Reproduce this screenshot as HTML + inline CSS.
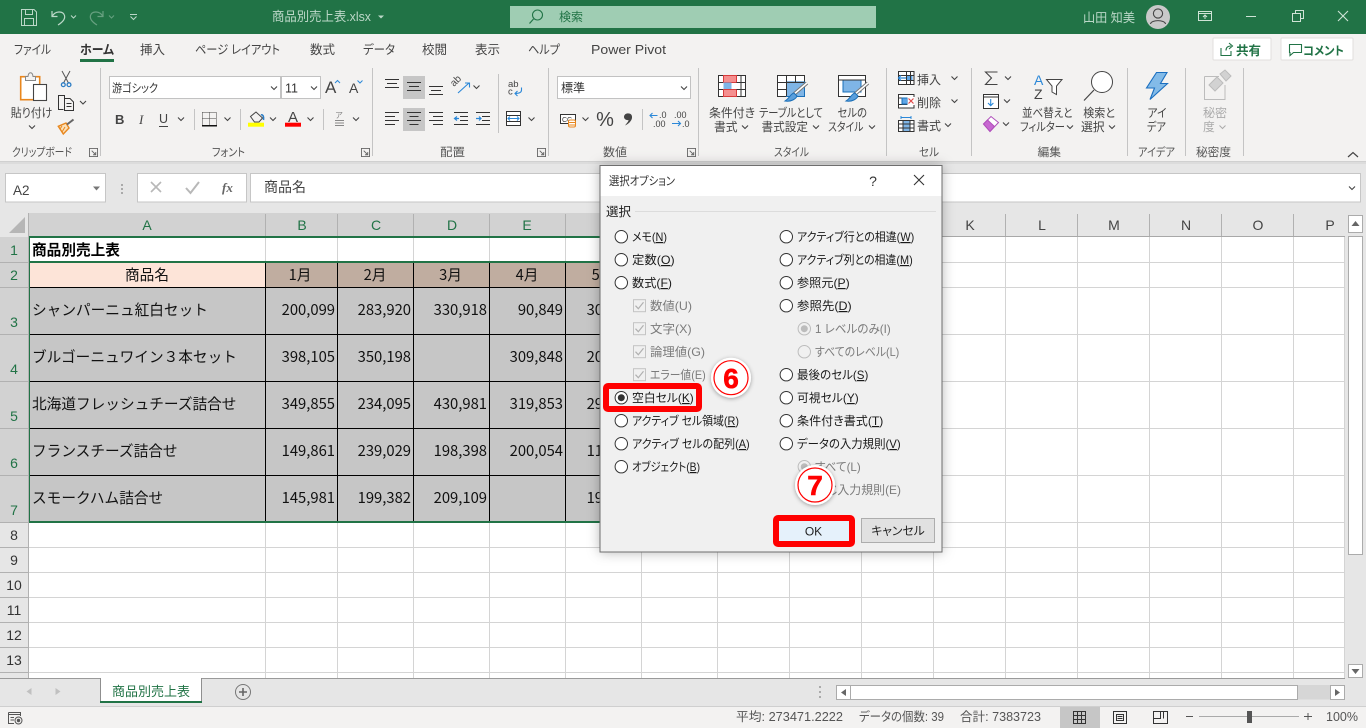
<!DOCTYPE html>
<html lang="ja"><head><meta charset="utf-8"><title>商品別売上表.xlsx - Excel</title>
<style>
html,body{margin:0;padding:0;width:1366px;height:728px;overflow:hidden;background:#fff}
svg{display:block;position:absolute;left:0;top:0}
text{font-family:"Liberation Sans","Noto Sans CJK JP",sans-serif;font-feature-settings:"palt";fill:#3f3f3f;font-size:12px}
.cell{font-family:"Noto Sans CJK JP",sans-serif;font-feature-settings:normal;font-size:14.67px;fill:#111;font-weight:400}
.num{font-family:"Noto Sans CJK JP",sans-serif;font-feature-settings:normal;font-size:14.8px;fill:#111;text-anchor:end;font-weight:400}
.ch{text-anchor:middle;font-size:14px;fill:#217346}
.chn{text-anchor:middle;font-size:14px;fill:#444}
.rh{text-anchor:middle;font-size:14px;fill:#217346}
.rhn{text-anchor:middle;font-size:14px;fill:#333}
.tab{font-size:12.5px;fill:#444}
.rb{font-size:11.8px;fill:#444}
.m{text-anchor:middle}
.grp{font-size:11.5px;fill:#555}
.tt{font-size:13px;fill:#bcd8c8}
.d{font-size:12px;fill:#1a1a1a}
.dd{font-size:12px;fill:#7b7b7b}
.st{font-size:12.5px;fill:#555}
.sm{font-size:9px;fill:#444}
.u{text-decoration:underline}
</style></head><body>
<svg width="1366" height="728" viewBox="0 0 1366 728" xmlns="http://www.w3.org/2000/svg">
<defs>
<path id="c" d="M-3,-1.5 L0,1.5 L3,-1.5" fill="none" stroke="#444" stroke-width="1.1"/>
<g id="r"><circle r="6.2" fill="#fff" stroke="#333" stroke-width="1"/></g>
<g id="rd"><circle r="6.2" fill="#f0f0f0" stroke="#bcbcbc" stroke-width="1"/></g>
<g id="cb"><rect x="-6" y="-6" width="12" height="12" fill="#f0f0f0" stroke="#c4c4c4"/><path d="M-4,0 L-1.2,3 L4,-3.5" fill="none" stroke="#b0b0b0" stroke-width="1.2"/></g>
<g id="lc"><path d="M0.5,0.5H9.5V9.5H0.5Z M3,3L7.5,7.5 M7.5,4.5V7.5H4.5" fill="none" stroke="#666" stroke-width="1" transform="scale(.9)"/></g>
<filter id="ds" x="-10%" y="-10%" width="120%" height="120%"><feDropShadow dx="0" dy="0" stdDeviation="6" flood-color="#000" flood-opacity=".28"/></filter>
<filter id="bs" x="-30%" y="-30%" width="160%" height="160%"><feDropShadow dx="0" dy="1" stdDeviation="2" flood-color="#000" flood-opacity=".35"/></filter>
</defs>

<!-- SHEET -->
<rect x="0" y="161" width="1366" height="52" fill="#e6e6e6"/>
<rect x="0" y="213" width="1366" height="465" fill="#fff"/>
<rect x="0" y="213" width="1345" height="24" fill="#e6e6e6"/>
<rect x="0" y="237" width="29" height="441" fill="#e6e6e6"/>
<rect x="29" y="213" width="905" height="24" fill="#d2d2d2"/>
<rect x="0" y="237" width="29" height="285" fill="#d2d2d2"/>
<path d="M25,217V233H9Z" fill="#b6b6b6"/>

<g stroke="#d4d4d4" stroke-width="1" fill="none">
<path d="M265.5,237V678M337.5,237V678M413.5,237V678M489.5,237V678M565.5,237V678M641.5,237V678M717.5,237V678M789.5,237V678M861.5,237V678M933.5,237V678M1005.5,237V678M1077.5,237V678M1149.5,237V678M1221.5,237V678M1293.5,237V678M1344.5,237V678"/>
<path d="M29,262.5H1345M29,287.5H1345M29,334.5H1345M29,381.5H1345M29,428.5H1345M29,475.5H1345M29,522.5H1345M29,547.5H1345M29,572.5H1345M29,597.5H1345M29,622.5H1345M29,647.5H1345M29,672.5H1345"/>
</g>
<!-- filled cells -->
<rect x="30" y="263" width="235" height="24" fill="#fde4d8"/>
<rect x="266" y="263" width="376" height="24" fill="#c0ada0"/>
<rect x="30" y="288" width="612" height="233" fill="#c6c6c6"/>
<g stroke="#000" stroke-width="1" fill="none">
<path d="M30,287.5H642M30,334.5H642M30,381.5H642M30,428.5H642M30,475.5H642"/>
<path d="M265.5,263V522M337.5,263V522M413.5,263V522M489.5,263V522M565.5,263V522"/>
</g>
<g stroke="#217346" stroke-width="2" fill="none">
<path d="M29,237H642M29,262H642M29,522H642M29,237V523"/>
</g>
<!-- header separators -->
<g stroke="#b1b1b1" stroke-width="1" fill="none">
<path d="M28.5,213V678M265.5,214V236M337.5,214V236M413.5,214V236M489.5,214V236M565.5,214V236M933.5,214V236M1005.5,214V236M1077.5,214V236M1149.5,214V236M1221.5,214V236M1293.5,214V236"/>
<path d="M0,262.5H28M0,287.5H28M0,334.5H28M0,381.5H28M0,428.5H28M0,475.5H28M0,522.5H28M0,547.5H28M0,572.5H28M0,597.5H28M0,622.5H28M0,647.5H28M0,672.5H28"/>
<path d="M934,236.5H1345" stroke="#a8a8a8"/>
</g>
<text class="ch" x="147" y="230">A</text><text class="ch" x="302" y="230">B</text><text class="ch" x="376" y="230">C</text><text class="ch" x="452" y="230">D</text><text class="ch" x="527" y="230">E</text>
<text class="chn" x="970" y="230">K</text><text class="chn" x="1042" y="230">L</text><text class="chn" x="1114" y="230">M</text><text class="chn" x="1186" y="230">N</text><text class="chn" x="1258" y="230">O</text><text class="chn" x="1330" y="230">P</text>
<text class="rh" x="14" y="255">1</text><text class="rh" x="14" y="280">2</text><text class="rh" x="14" y="327">3</text><text class="rh" x="14" y="374">4</text><text class="rh" x="14" y="421">5</text><text class="rh" x="14" y="468">6</text><text class="rh" x="14" y="515">7</text>
<text class="rhn" x="14" y="540">8</text><text class="rhn" x="14" y="565">9</text><text class="rhn" x="14" y="590">10</text><text class="rhn" x="14" y="615">11</text><text class="rhn" x="14" y="640">12</text><text class="rhn" x="14" y="665">13</text>

<text class="cell" x="32" y="255" style="font-weight:700;fill:#000">商品別売上表</text>
<text class="cell m" x="147" y="280">商品名</text>
<text class="cell m" x="300" y="280">1月</text><text class="cell m" x="375" y="280">2月</text><text class="cell m" x="450.5" y="280">3月</text><text class="cell m" x="527" y="280">4月</text><text class="cell m" x="603" y="280">5月</text>
<text class="cell" x="32" y="315">シャンパーニュ紅白セット</text>
<text class="cell" x="32" y="362">ブルゴーニュワイン３本セット</text>
<text class="cell" x="32" y="409">北海道フレッシュチーズ詰合せ</text>
<text class="cell" x="32" y="456">フランスチーズ詰合せ</text>
<text class="cell" x="32" y="503">スモークハム詰合せ</text>
<text class="num" x="335" y="315">200,099</text><text class="num" x="411" y="315">283,920</text><text class="num" x="487" y="315">330,918</text><text class="num" x="563" y="315">90,849</text><text class="num" x="603" y="315">30</text>
<text class="num" x="335" y="362">398,105</text><text class="num" x="411" y="362">350,198</text><text class="num" x="563" y="362">309,848</text><text class="num" x="603" y="362">20</text>
<text class="num" x="335" y="409">349,855</text><text class="num" x="411" y="409">234,095</text><text class="num" x="487" y="409">430,981</text><text class="num" x="563" y="409">319,853</text><text class="num" x="603" y="409">29</text>
<text class="num" x="335" y="456">149,861</text><text class="num" x="411" y="456">239,029</text><text class="num" x="487" y="456">198,398</text><text class="num" x="563" y="456">200,054</text><text class="num" x="603" y="456">11</text>
<text class="num" x="335" y="503">145,981</text><text class="num" x="411" y="503">199,382</text><text class="num" x="487" y="503">209,109</text><text class="num" x="603" y="503">19</text>

<!-- vertical scrollbar -->
<rect x="1345" y="213" width="21" height="465" fill="#e6e6e6"/>
<rect x="1348.5" y="215.5" width="14" height="17" fill="#fff" stroke="#ababab"/><path d="M1351.5,226L1355.5,221L1359.5,226Z" fill="#666"/>
<rect x="1348.5" y="236.5" width="14" height="318" fill="#fff" stroke="#ababab"/>
<rect x="1348.5" y="664.5" width="14" height="13" fill="#fff" stroke="#ababab"/><path d="M1351.5,669L1355.5,674L1359.5,669Z" fill="#666"/>

<!-- tab bar -->
<rect x="0" y="678" width="1366" height="28" fill="#e6e6e6"/>
<path d="M0,678.5H1345" stroke="#9a9a9a"/>
<rect x="100" y="678" width="101" height="25" fill="#fff"/>
<path d="M100.5,678V702M201.5,678V702" stroke="#8f8f8f"/>
<rect x="100" y="701" width="102" height="2" fill="#217346"/>
<text x="151" y="696" class="m" style="font-size:13px;fill:#217346;font-feature-settings:normal">商品別売上表</text>
<path d="M31.5,688V695L26.5,691.5Z" fill="#c0c0c0"/><path d="M55.5,688V695L60.5,691.5Z" fill="#c0c0c0"/>
<circle cx="243" cy="692" r="7.5" fill="none" stroke="#777" stroke-width="1"/><path d="M239,692H247M243,688V696" stroke="#666" stroke-width="1.6"/>
<g fill="#aaa"><rect x="819" y="686" width="2" height="2"/><rect x="819" y="691" width="2" height="2"/><rect x="819" y="696" width="2" height="2"/></g>
<rect x="1298" y="685" width="33" height="14.5" fill="#d6d6d6"/>
<rect x="836.5" y="685.5" width="14" height="14" fill="#fff" stroke="#ababab"/><path d="M846,689V696L841,692.5Z" fill="#666"/>
<rect x="850.5" y="685.5" width="447" height="14" fill="#fff" stroke="#ababab"/>
<rect x="1330.5" y="685.5" width="14" height="14" fill="#fff" stroke="#ababab"/><path d="M1335,689V696L1340,692.5Z" fill="#666"/>

<!-- status bar -->
<rect x="0" y="706" width="1366" height="22" fill="#f3f2f1"/>
<path d="M0,706.5H1366" stroke="#cfcfcf"/>
<g fill="none" stroke="#555"><path d="M8.5,712.5H20.5V716M8.5,712.5V723.5H14M8.5,714.5H20.5M10.5,717.5H14M10.5,720H14"/><circle cx="18.5" cy="720.5" r="3.5"/><circle cx="18.5" cy="720.5" r="1.2" fill="#555"/></g>
<text class="st" x="736" y="721" textLength="107" lengthAdjust="spacingAndGlyphs">平均: 273471.2222</text><text class="st" x="859" y="721" textLength="85" lengthAdjust="spacingAndGlyphs">データの個数: 39</text><text class="st" x="960" y="721" textLength="81" lengthAdjust="spacingAndGlyphs">合計: 7383723</text>
<rect x="1060" y="707" width="40" height="21" fill="#c6c6c6"/>
<g fill="none" stroke="#333"><path d="M1073.5,711.5H1085.5V723.5H1073.5ZM1077.5,711.5V723.5M1081.5,711.5V723.5M1073.5,715.5H1085.5M1073.5,719.5H1085.5"/>
<path d="M1113.5,711.5H1126.5V723.5H1113.5ZM1116.5,714.5H1123.5V720.5H1116.5ZM1117.5,716.5H1122.5M1117.5,718.5H1122.5"/>
<path d="M1153.5,711.5H1167.5V723.5H1153.5ZM1160.5,711.5V718.5H1153.5M1163.5,711.5V718.5"/></g>
<path d="M1186,716.5H1193M1304,716.5H1312M1308,713V720" stroke="#555" stroke-width="1"/>
<path d="M1199,716.5H1299" stroke="#aaa"/><rect x="1247" y="711" width="5" height="12" fill="#555"/>
<text class="st" x="1326" y="721" textLength="32" lengthAdjust="spacingAndGlyphs">100%</text>

<!-- formula bar -->
<rect x="5.5" y="173.5" width="100" height="28.5" fill="#fff" stroke="#c6c6c6"/>
<text x="13" y="195" style="font-size:13.5px;fill:#444">A2</text>
<path d="M93,186.5H100L96.5,190.5Z" fill="#777"/>
<g fill="#aaa"><rect x="121" y="184" width="2" height="2"/><rect x="121" y="188" width="2" height="2"/><rect x="121" y="192" width="2" height="2"/></g>
<rect x="137.5" y="173.5" width="109" height="28.5" fill="#fff" stroke="#c6c6c6"/>
<path d="M151,182L161,192M161,182L151,192" stroke="#b8b8b8" stroke-width="1.6"/>
<path d="M186,188L190.5,193L199,182" fill="none" stroke="#b8b8b8" stroke-width="2"/>
<text x="222" y="192" style="font-family:'Liberation Serif',serif;font-style:italic;font-weight:700;font-size:13px;fill:#666">fx</text>
<rect x="250.5" y="173.5" width="1110" height="28.5" fill="#fff" stroke="#c6c6c6"/>
<text x="264" y="192" style="font-size:14px;fill:#444;font-feature-settings:normal">商品名</text>
<use href="#c" x="1352" y="188"/>

<!-- TITLE BAR -->
<rect x="0" y="0" width="1366" height="34" fill="#217346"/>
<g fill="none" stroke="#bcd8c8" stroke-width="1">
<path d="M21.5,9.5H34L36.5,12V25.5H21.5ZM25.5,9.5V14.5H32.5V9.5M24.5,25.5V18.5H33.5V25.5"/>
<path d="M52,11V16.5H57.5M52.5,16C55,11 63,10.5 64.5,15.5C65.5,19 62,22.5 58,25" stroke-width="1.2"/>
<path d="M71,15.5L73.5,18L76,15.5"/>
<g opacity=".45"><path d="M103,11V16.5H97.5M102.5,16C100,11 92,10.5 90.5,15.5C89.5,19 93,22.5 97,25" stroke-width="1.2"/><path d="M109,15.5L111.5,18L114,15.5"/></g>
<path d="M130,14.5H137M130.5,16.5L133.5,19.5L136.5,16.5"/>
</g>
<text class="tt" x="272" y="21" textLength="99" lengthAdjust="spacingAndGlyphs">商品別売上表.xlsx</text>
<path d="M378,15.5H384L381,18.5Z" fill="#bcd8c8"/>
<rect x="510" y="6" width="366" height="22" fill="#9fcdb3"/>
<circle cx="537.5" cy="15" r="5" fill="none" stroke="#217346" stroke-width="1.1"/><path d="M533.5,19L529.5,23.5" stroke="#217346" stroke-width="1.2"/>
<text x="559" y="21" style="font-size:12px;fill:#217346">検索</text>
<text class="tt" x="1083" y="22" style="font-size:12.5px" textLength="52" lengthAdjust="spacingAndGlyphs">山田 知美</text>
<circle cx="1158" cy="17" r="12" fill="#c9c9c9"/>
<circle cx="1158" cy="13.5" r="4.6" fill="none" stroke="#444" stroke-width="1.1"/><path d="M1150.5,24C1151,19.5 1165,19.5 1165.5,24" fill="none" stroke="#444" stroke-width="1.1"/>
<g fill="none" stroke="#cfe3d6" stroke-width="1">
<path d="M1198.5,11.5H1211.5V20.5H1198.5ZM1198.5,13.5H1211.5M1205,19V15M1203,17L1205,15L1207,17"/>
<path d="M1246,16.5H1256"/>
<path d="M1292.5,13.5H1300.5V21.5H1292.5ZM1295.5,13V10.5H1303.5V18.5H1301"/>
<path d="M1338,11L1348,21M1348,11L1338,21" stroke-width="1.1"/>
</g>

<!-- RIBBON -->
<rect x="0" y="34" width="1366" height="127" fill="#f3f2f1"/>
<rect x="0" y="161" width="1366" height="1" fill="#d0d0d0"/>
<rect x="0" y="162" width="1366" height="2" fill="#dcdcdc"/>
<text class="tab" x="14" y="54" textLength="37" lengthAdjust="spacingAndGlyphs">ファイル</text>
<text class="tab" x="80" y="54" style="font-weight:700;fill:#333" textLength="34" lengthAdjust="spacingAndGlyphs">ホーム</text>
<rect x="80" y="59" width="34" height="3" fill="#217346"/>
<text class="tab" x="140" y="54">挿入</text><text class="tab" x="195" y="54" textLength="85" lengthAdjust="spacingAndGlyphs">ページ レイアウト</text><text class="tab" x="310" y="54">数式</text><text class="tab" x="363" y="54" textLength="32" lengthAdjust="spacingAndGlyphs">データ</text><text class="tab" x="422" y="54">校閲</text><text class="tab" x="475" y="54">表示</text><text class="tab" x="528" y="54" textLength="32" lengthAdjust="spacingAndGlyphs">ヘルプ</text><text class="tab" x="591" y="54" style="font-size:13.2px" textLength="75" lengthAdjust="spacingAndGlyphs">Power Pivot</text>

<rect x="1213" y="38" width="58" height="22" rx="1" fill="#fff" stroke="#e1dfdd"/>
<path d="M1221,48V55.5H1231V51M1226,50.5C1226,47.5 1228,46 1231,46M1229,43L1232.5,46L1229,49" fill="none" stroke="#217346" stroke-width="1.1"/>
<text x="1236" y="55" style="font-size:12.5px;font-weight:700;fill:#217346">共有</text>
<rect x="1281" y="38" width="72" height="22" rx="1" fill="#fff" stroke="#e1dfdd"/>
<path d="M1289.5,44.5H1301.5V52.5H1293.5L1290,55.5V52.5H1289.5Z" fill="none" stroke="#217346" stroke-width="1.1"/>
<text x="1303" y="55" style="font-size:12px;font-weight:700;fill:#217346" textLength="41" lengthAdjust="spacingAndGlyphs">コメント</text>

<g stroke="#c4c4c4" stroke-width="1" fill="none">
<path d="M100.5,68V156M372.5,68V156M548.5,68V156M698.5,68V156M886.5,68V156M971.5,68V156M1127.5,68V156M1185.5,68V156M1243.5,68V156M498.5,74V133"/>
<path d="M194.5,109V130M240.5,109V130M323.5,109V130M642.5,109V130"/>
</g>

<!-- clipboard -->
<rect x="20.7" y="76.7" width="19" height="23" fill="#fff" stroke="#e8871e" stroke-width="1.6"/>
<path d="M25.5,80.5V76.5H28C28.5,71.5 32.5,71.5 33,76.5H35.5V80.5Z" fill="#f3f2f1" stroke="#888"/>
<rect x="33.5" y="84.5" width="13" height="16" fill="#fff" stroke="#444" stroke-width="1.1"/>
<text class="rb" x="10.7" y="117" textLength="41.6" lengthAdjust="spacingAndGlyphs">貼り付け</text><use href="#c" x="32" y="127"/>
<g fill="none">
<path d="M62,71L68.5,83M70,71L63.5,83" stroke="#555"/><circle cx="63.3" cy="84.7" r="1.9" stroke="#2b7cc4" stroke-width="1.3"/><circle cx="69" cy="84.7" r="1.9" stroke="#2b7cc4" stroke-width="1.3"/>
<path d="M63.5,109.5H58.5V95.5H64.5V98" stroke="#333"/>
<path d="M64.5,98.5H70L73.5,102V110.500H64.5ZM66.5,103.500H71.500M66.5,106.500H71.500" stroke="#333"/>
<path d="M58.3,126.3L66,123L69,128L63.3,134Z" fill="#fbe0b8" stroke="#e8871e" stroke-width="1.4"/>
<path d="M62,126L60,129M65,127L62,132" stroke="#e8871e"/>
<path d="M67,124.500L73.500,119.500" stroke="#666" stroke-width="2"/>
</g>
<use href="#c" x="83" y="102.500"/>
<text class="grp" x="12" y="156" textLength="60" lengthAdjust="spacingAndGlyphs">クリップボード</text><use href="#lc" x="89" y="148"/>

<!-- font -->
<rect x="109.5" y="76.5" width="171" height="22" fill="#fff" stroke="#c2c2c2"/>
<rect x="281.5" y="76.5" width="39" height="22" fill="#fff" stroke="#c2c2c2"/>
<text x="112" y="92" style="font-size:11.5px;fill:#333" textLength="46" lengthAdjust="spacingAndGlyphs">游ゴシック</text><use href="#c" x="274" y="88"/>
<text x="285" y="92.5" style="font-size:12.5px;fill:#333">11</text><use href="#c" x="314" y="88"/>
<text x="325" y="93" style="font-size:17px;fill:#444">A</text><path d="M335,83L337.5,80.5L340,83" fill="none" stroke="#2b88d8"/>
<text x="349" y="93" style="font-size:14px;fill:#444">A</text><path d="M357.5,80.5L360,83L362.5,80.5" fill="none" stroke="#2b88d8"/>
<text x="115" y="124" style="font-size:13px;font-weight:700;fill:#444">B</text>
<text x="139" y="124" style="font-size:13px;font-style:italic;font-family:'Liberation Serif',serif;fill:#444">I</text>
<text x="159" y="123" style="font-size:12.5px;fill:#444">U</text><path d="M159,126.5H168" stroke="#444"/>
<use href="#c" x="181" y="119"/>
<path d="M202.5,112.5H216.5M202.5,112.500V125M216.5,112.500V125M209.5,112.500V125M202.5,118.500H216.5" stroke="#444" stroke-dasharray="1 1" fill="none"/><rect x="202" y="125" width="15" height="1.5" fill="#111"/>
<use href="#c" x="227.5" y="119"/>
<path d="M250.5,116.5L256,112L262.500,118L259,122H254.500Z" fill="#f3f2f1" stroke="#444"/><path d="M261,115C263,114 264,117 263.500,120" stroke="#2b7cc4" fill="none" stroke-width="1.6"/>
<rect x="248" y="122.7" width="16" height="4" fill="#ff0"/><use href="#c" x="273" y="119"/>
<text class="m" x="293" y="122" style="font-size:15px;fill:#444">A</text><rect x="285" y="122.7" width="16" height="4" fill="#f00"/><use href="#c" x="310.5" y="119"/>
<text class="m" x="339" y="118" style="font-size:8px;fill:#888">ア</text><path d="M335,120.5H344M335,123H344M335,125.500H344" stroke="#888"/><use href="#c" x="356" y="119"/>
<text class="grp" x="212" y="156" textLength="33" lengthAdjust="spacingAndGlyphs">フォント</text><use href="#lc" x="361" y="148"/>

<!-- alignment -->
<rect x="403" y="76" width="22" height="23" fill="#c6c6c6"/><rect x="403" y="108" width="22" height="23" fill="#c6c6c6"/>
<g stroke="#333" stroke-width="1" fill="none">
<path d="M385,79.5H399M387,83.5H397M385,87.5H399M407,82.5H421M409,86.5H419M407,90.5H421M429,86.5H443M431,90.5H441M429,94.5H443"/>
<path d="M385,112.5H399M385,116.5H395M385,120.5H399M385,124.5H395"/>
<path d="M407,112.5H421M409.500,116.5H418.500M407,120.5H421M409.5,124.5H418.500"/>
<path d="M429,112.5H443M433,116.5H443M429,120.5H443M433,124.5H443"/>
<path d="M454,112.5H468M460,116.5H468M460,120.5H468M454,124.5H468"/>
<path d="M476,112.5H490M482,116.5H490M482,120.5H490M476,124.5H490"/>
</g>
<path d="M454.5,118.5H459M457,116.500L454.5,118.5L457,120.500M476,118.5H481M479,116.500L481,118.5L479,120.500" stroke="#2b88d8" fill="none" stroke-width="1.2"/>
<text x="0" y="0" transform="translate(454,87) rotate(-45)" style="font-size:10px;fill:#444">ab</text>
<path d="M458,93L469,83M465,83H469.500V87.500" stroke="#2b88d8" fill="none" stroke-width="1.1"/><use href="#c" x="476.5" y="87"/>
<text x="508" y="87" style="font-size:9.5px;fill:#444">ab</text><text x="508" y="94.5" style="font-size:9.5px;fill:#444">c</text><path d="M521.5,87.500V90C521.5,93 518.500,93.500 515,93.500M517.500,91L515,93.500L517.500,96" stroke="#2b88d8" fill="none" stroke-width="1.1"/>
<rect x="506.5" y="111.5" width="14" height="14" fill="#fff" stroke="#333"/><path d="M507,115.500H520M507,121.500H520" stroke="#333"/><path d="M507.5,118.5H519.500M510,116.5L508,118.500L510,120.500M517,116.5L519,118.500L517,120.500" stroke="#2b88d8" fill="none"/><use href="#c" x="531.5" y="119"/>
<text class="grp" x="440" y="156" textLength="25" lengthAdjust="spacingAndGlyphs">配置</text><use href="#lc" x="537" y="148"/>

<!-- number -->
<rect x="557.5" y="76.5" width="133" height="22" fill="#fff" stroke="#c2c2c2"/>
<text x="561" y="92" style="font-size:12px;fill:#333">標準</text><use href="#c" x="684" y="88"/>
<rect x="560.5" y="114.5" width="15" height="9" fill="#fff" stroke="#333"/><text x="562" y="122" style="font-size:7px;fill:#333">CC</text><rect x="568.5" y="120" width="7" height="7" rx="1.5" fill="#fff" stroke="#e8871e"/><path d="M569,122.500H575.500M569,125H575.500" stroke="#e8871e"/>
<use href="#c" x="585.5" y="119"/>
<text class="m" x="605" y="126" style="font-size:20px;fill:#444">%</text>
<path d="M627,113.500C630,113 632.500,114.500 632,118C631.500,121 628.500,124 625,125.500C627,123 628.500,121.500 628.500,120C626.500,120.500 624,119 624,117C624,115 625.500,113.700 627,113.500Z" fill="#444"/>
<path d="M650,115.500H657.500M652.500,113L650,115.500L652.500,118" stroke="#2b88d8" fill="none" stroke-width="1.1"/>
<text class="sm" x="659" y="118">.0</text><text class="sm" x="653" y="126.800">.00</text>
<text class="sm" x="674" y="118">.00</text><text class="sm" x="682" y="126.800">.0</text>
<path d="M672,123.500H680.500M678,121L680.500,123.500L678,126" stroke="#2b88d8" fill="none" stroke-width="1.1"/>
<text class="grp" x="603" y="156" textLength="24" lengthAdjust="spacingAndGlyphs">数値</text><use href="#lc" x="687" y="148"/>

<!-- styles -->
<g stroke="#333" fill="none">
<rect x="718.5" y="75.5" width="27" height="21" fill="#fff"/>
<rect x="723.5" y="75.5" width="13" height="7" fill="#f58f8f" stroke="#d83b3b"/><rect x="723.5" y="82.5" width="8" height="7" fill="#7fb5e6" stroke="none"/><rect x="723.5" y="89.5" width="13" height="7" fill="#f58f8f" stroke="#d83b3b"/>
<path d="M718.5,82.5H723M718.5,89.5H723M736.5,82.5H745.5M736.5,89.5H745.5M741,75.5V96.5"/>
<rect x="777.5" y="75.5" width="27" height="21" fill="#fff"/>
<rect x="786.5" y="82" width="18" height="14.5" fill="#7fb5e6" stroke="#1a6fb8"/>
<path d="M777.5,82.5H804M777.5,89.5H786M786.5,75.5V96M795.5,75.5V82"/>
<rect x="838.5" y="75.5" width="27" height="21" fill="#fff"/>
<rect x="843" y="80" width="18" height="12" fill="#7fb5e6" stroke="#1a6fb8"/>
<path d="M838.5,80H866"/>
</g>
<g fill="none"><path d="M807,83L793,95" stroke="#777" stroke-width="3.5"/><path d="M807,83L793,95" stroke="#fff" stroke-width="1.5"/><path d="M794,93C790,94 790,98 785,101C791,102 796,99 797,96Z" fill="#5b9fdc" stroke="#1a6fb8"/>
<path d="M868,83L854,95" stroke="#777" stroke-width="3.5"/><path d="M868,83L854,95" stroke="#fff" stroke-width="1.5"/><path d="M855,93C851,94 851,98 846,101C852,102 857,99 858,96Z" fill="#5b9fdc" stroke="#1a6fb8"/></g>
<text class="rb" x="709" y="117" textLength="46" lengthAdjust="spacingAndGlyphs">条件付き</text><text class="rb" x="714" y="131">書式</text><use href="#c" x="745" y="127"/>
<text class="rb" x="759" y="117" textLength="64" lengthAdjust="spacingAndGlyphs">テーブルとして</text><text class="rb" x="761.5" y="131" textLength="46.5" lengthAdjust="spacingAndGlyphs">書式設定</text><use href="#c" x="816" y="127"/>
<text class="rb" x="837.5" y="117" textLength="29.5" lengthAdjust="spacingAndGlyphs">セルの</text><text class="rb" x="828" y="131" textLength="35.500" lengthAdjust="spacingAndGlyphs">スタイル</text><use href="#c" x="872" y="127"/>
<text class="grp" x="774" y="156" textLength="35" lengthAdjust="spacingAndGlyphs">スタイル</text>

<!-- cells -->
<g fill="none" stroke="#333">
<rect x="898.5" y="71.5" width="15.5" height="13" fill="#fff"/><rect x="906.5" y="75.5" width="6" height="5.500" fill="#5da5e6" stroke="none"/><path d="M898.500,75.500H914M898.500,80.500H914M906.500,71.500V84.500M910.500,71.500V84.500"/><path d="M898.500,78H906M901,75.500L898.500,78L901,80.500" stroke="#2b88d8" stroke-width="1.200"/>
<rect x="898.5" y="94.5" width="15.5" height="13.500" fill="#fff"/><path d="M898.500,98H914M898.500,104.500H914"/><rect x="902" y="98" width="5.500" height="6" fill="#5da5e6" stroke="#1a6fb8"/><rect x="907.500" y="97" width="7" height="8" fill="#fff" stroke="none"/><path d="M908.500,98.500L913.500,103.500M913.500,98.500L908.500,103.500" stroke="#e04a4a" stroke-width="1.200"/>
<rect x="898.5" y="120.5" width="15.5" height="11" fill="#fff"/><rect x="903" y="121" width="7" height="10" fill="#7fb5e6" stroke="none"/><path d="M898.500,124H914M898.500,128H914M903,120.500V131.500M910,120.500V131.500"/><path d="M901,117.500H911M901,116V119M911,116V119" stroke="#2b88d8"/>
</g>
<text class="rb" x="917" y="84" style="font-size:12px">挿入</text><use href="#c" x="954.500" y="78"/>
<text class="rb" x="917" y="107" style="font-size:12px">削除</text><use href="#c" x="954.500" y="101"/>
<text class="rb" x="917" y="130" style="font-size:12px">書式</text><use href="#c" x="948" y="125"/>
<text class="grp" x="919" y="156" textLength="20" lengthAdjust="spacingAndGlyphs">セル</text>

<!-- editing -->
<path d="M997.500,72H985.500L991.500,78L985.500,84.500H997.500" fill="none" stroke="#444" stroke-width="1.100"/><use href="#c" x="1008" y="78"/>
<rect x="983.5" y="94.5" width="15" height="14" fill="#fff" stroke="#333"/><path d="M983.5,97H998.5" stroke="#333"/><path d="M990.700,99V105.500M988,103L990.700,105.700L993.400,103" stroke="#2b88d8" fill="none" stroke-width="1.100"/><use href="#c" x="1007" y="101"/>
<path d="M983.5,124L991,116.500L998.5,122.500L990,131.500Z" fill="#fff" stroke="#b04fbb"/><path d="M983.5,124L987.500,120L994.500,126.500L990,131.500Z" fill="#c768d1" stroke="#b04fbb"/><use href="#c" x="1006" y="124"/>
<text x="1034" y="85" style="font-size:14px;fill:#2b88d8">A</text><text x="1034" y="99" style="font-size:14px;fill:#444">Z</text>
<path d="M1046.5,79.5H1062L1056.5,86V94.500L1052,92V86Z" fill="#fff" stroke="#444"/>
<circle cx="1102" cy="82" r="10.5" fill="#fff" stroke="#444"/><path d="M1094,90L1084,100.5" stroke="#444" stroke-width="1.2"/>
<text class="rb" x="1022" y="117" textLength="50.500" lengthAdjust="spacingAndGlyphs">並べ替えと</text><text class="rb" x="1020" y="131" textLength="45" lengthAdjust="spacingAndGlyphs">フィルター</text><use href="#c" x="1070" y="127"/>
<text class="rb" x="1083.300" y="117" textLength="31.700" lengthAdjust="spacingAndGlyphs">検索と</text><text class="rb" x="1081" y="131">選択</text><use href="#c" x="1112" y="127"/>
<text class="grp" x="1037.500" y="156" textLength="23.500" lengthAdjust="spacingAndGlyphs">編集</text>

<!-- ideas -->
<path d="M1156.5,72.5H1167L1160.5,83.5H1167.5L1150,99.5L1154.5,88H1146.5Z" fill="#83bbe8" stroke="#1b6fc0" stroke-width="1.1"/>
<text class="rb" x="1147.500" y="117" textLength="19" lengthAdjust="spacingAndGlyphs">アイ</text><text class="rb" x="1147" y="131" textLength="19" lengthAdjust="spacingAndGlyphs">デア</text>
<text class="grp" x="1138" y="156" textLength="37" lengthAdjust="spacingAndGlyphs">アイデア</text>
<!-- sensitivity -->
<path d="M1204.5,76.5H1219M1204.5,76.500V99.500H1225V85" fill="#f3f2f1" stroke="#bcbcbc"/>
<path d="M1209,85L1217,77L1223,83L1215,91Z" fill="#d2d2d2" stroke="#bcbcbc"/><path d="M1220,74L1225,70L1231,76L1226,81Z" fill="#d2d2d2" stroke="#bcbcbc"/>
<text class="rb" x="1203" y="117" style="fill:#aaa" textLength="24" lengthAdjust="spacingAndGlyphs">秘密</text><text class="rb" x="1203" y="131" style="fill:#aaa">度</text>
<path d="M1219.500,125.500L1222.500,128.500L1225.500,125.500" fill="none" stroke="#aaa"/>
<text class="grp" x="1196" y="156" textLength="35" lengthAdjust="spacingAndGlyphs">秘密度</text>
<path d="M1348,157L1353,152.5L1358,157" fill="none" stroke="#444" stroke-width="1.2"/>

<!-- DIALOG -->
<rect x="600" y="165.5" width="342" height="386.5" fill="#f0f0f0" stroke="#6e6e6e" filter="url(#ds)"/>
<rect x="600.5" y="166" width="341" height="30" fill="#fff"/>
<text x="609" y="185" style="font-size:11.8px;fill:#333" textLength="66" lengthAdjust="spacingAndGlyphs">選択オプション</text>
<text x="873" y="186" class="m" style="font-size:14px;fill:#333">?</text>
<path d="M914,175L924,185M924,175L914,185" stroke="#333" stroke-width="1.1"/>
<text x="606" y="216" class="d" style="font-size:12.5px">選択</text>
<path d="M635,211.5H936" stroke="#dcdcdc"/>

<use href="#r" x="621.3" y="236.7"/><text class="d" x="632" y="241" textLength="35" lengthAdjust="spacingAndGlyphs">メモ(<tspan class="u">N</tspan>)</text>
<use href="#r" x="621.3" y="259.7"/><text class="d" x="632" y="264" textLength="42.7" lengthAdjust="spacingAndGlyphs">定数(<tspan class="u">O</tspan>)</text>
<use href="#r" x="621.3" y="282.7"/><text class="d" x="632" y="287" textLength="40" lengthAdjust="spacingAndGlyphs">数式(<tspan class="u">F</tspan>)</text>
<use href="#cb" x="639.5" y="305.7"/><text class="dd" x="650" y="310" textLength="42" lengthAdjust="spacingAndGlyphs">数値(U)</text>
<use href="#cb" x="639.5" y="328.7"/><text class="dd" x="650" y="333" textLength="41.7" lengthAdjust="spacingAndGlyphs">文字(X)</text>
<use href="#cb" x="639.5" y="351.7"/><text class="dd" x="650" y="356" textLength="55" lengthAdjust="spacingAndGlyphs">論理値(G)</text>
<use href="#cb" x="639.5" y="374.7"/><text class="dd" x="650" y="379" textLength="55.7" lengthAdjust="spacingAndGlyphs">エラー値(E)</text>
<use href="#r" x="621.3" y="397.7"/><circle cx="621.3" cy="397.7" r="3.5" fill="#333"/><text class="d" x="632" y="402" textLength="61.7" lengthAdjust="spacingAndGlyphs">空白セル(<tspan class="u">K</tspan>)</text>
<use href="#r" x="621.3" y="420.7"/><text class="d" x="632" y="425" textLength="107" lengthAdjust="spacingAndGlyphs">アクティブ セル領域(<tspan class="u">R</tspan>)</text>
<use href="#r" x="621.3" y="443.7"/><text class="d" x="632" y="448" textLength="117.7" lengthAdjust="spacingAndGlyphs">アクティブ セルの配列(<tspan class="u">A</tspan>)</text>
<use href="#r" x="621.3" y="466.7"/><text class="d" x="632" y="471" textLength="68" lengthAdjust="spacingAndGlyphs">オブジェクト(<tspan class="u">B</tspan>)</text>

<use href="#r" x="786.3" y="236.7"/><text class="d" x="797" y="241" textLength="117.3" lengthAdjust="spacingAndGlyphs">アクティブ行との相違(<tspan class="u">W</tspan>)</text>
<use href="#r" x="786.3" y="259.7"/><text class="d" x="797" y="264" textLength="115.7" lengthAdjust="spacingAndGlyphs">アクティブ列との相違(<tspan class="u">M</tspan>)</text>
<use href="#r" x="786.3" y="282.7"/><text class="d" x="797" y="287" textLength="52.7" lengthAdjust="spacingAndGlyphs">参照元(<tspan class="u">P</tspan>)</text>
<use href="#r" x="786.3" y="305.7"/><text class="d" x="797" y="310" textLength="54.7" lengthAdjust="spacingAndGlyphs">参照先(<tspan class="u">D</tspan>)</text>
<use href="#rd" x="804.3" y="328.7"/><circle cx="804.3" cy="328.7" r="3.5" fill="#bcbcbc"/><text class="dd" x="815" y="333" textLength="75.7" lengthAdjust="spacingAndGlyphs">1 レベルのみ(I)</text>
<use href="#rd" x="804.3" y="351.7"/><text class="dd" x="815" y="356" textLength="84.3" lengthAdjust="spacingAndGlyphs">すべてのレベル(L)</text>
<use href="#r" x="786.3" y="374.7"/><text class="d" x="797" y="379" textLength="71.3" lengthAdjust="spacingAndGlyphs">最後のセル(<tspan class="u">S</tspan>)</text>
<use href="#r" x="786.3" y="397.7"/><text class="d" x="797" y="402" textLength="61.7" lengthAdjust="spacingAndGlyphs">可視セル(<tspan class="u">Y</tspan>)</text>
<use href="#r" x="786.3" y="420.7"/><text class="d" x="797" y="425" textLength="86.3" lengthAdjust="spacingAndGlyphs">条件付き書式(<tspan class="u">T</tspan>)</text>
<use href="#r" x="786.3" y="443.7"/><text class="d" x="797" y="448" textLength="103.7" lengthAdjust="spacingAndGlyphs">データの入力規則(<tspan class="u">V</tspan>)</text>
<use href="#rd" x="804.3" y="466.7"/><circle cx="804.3" cy="466.7" r="3.5" fill="#bcbcbc"/><text class="dd" x="815" y="471" textLength="45.7" lengthAdjust="spacingAndGlyphs">すべて(L)</text>
<use href="#rd" x="804.3" y="489.7"/><text class="dd" x="815" y="494" textLength="86" lengthAdjust="spacingAndGlyphs">同じ入力規則(E)</text>

<!-- buttons -->
<rect x="861.5" y="518.5" width="73" height="24" fill="#e1e1e1" stroke="#adadad"/>
<text class="m" x="898" y="535" style="font-size:11.8px;fill:#222">キャンセル</text>
<rect x="776" y="518" width="76" height="26" rx="2" fill="#e5f1fb" stroke="#f00" stroke-width="6"/>
<text class="m" x="813.5" y="535.5" style="font-size:12px;fill:#222">OK</text>
<rect x="606" y="386" width="93" height="23" rx="2" fill="none" stroke="#f00" stroke-width="6"/>

<!-- badges -->
<g>
<circle cx="731" cy="377.7" r="20" fill="#fff" filter="url(#bs)"/>
<circle cx="731" cy="377.7" r="17" fill="#fff" stroke="#f00" stroke-width="1.2"/>
<text class="m" x="731" y="388" style="font-size:28px;font-weight:700;fill:#f00;stroke:#f00;stroke-width:.6px">6</text>
<circle cx="815" cy="485" r="20" fill="#fff" filter="url(#bs)"/>
<circle cx="815" cy="485" r="17" fill="#fff" stroke="#f00" stroke-width="1.2"/>
<text class="m" x="815" y="495" style="font-size:28px;font-weight:700;fill:#f00;stroke:#f00;stroke-width:.6px">7</text>
</g>
</svg>
</body></html>
